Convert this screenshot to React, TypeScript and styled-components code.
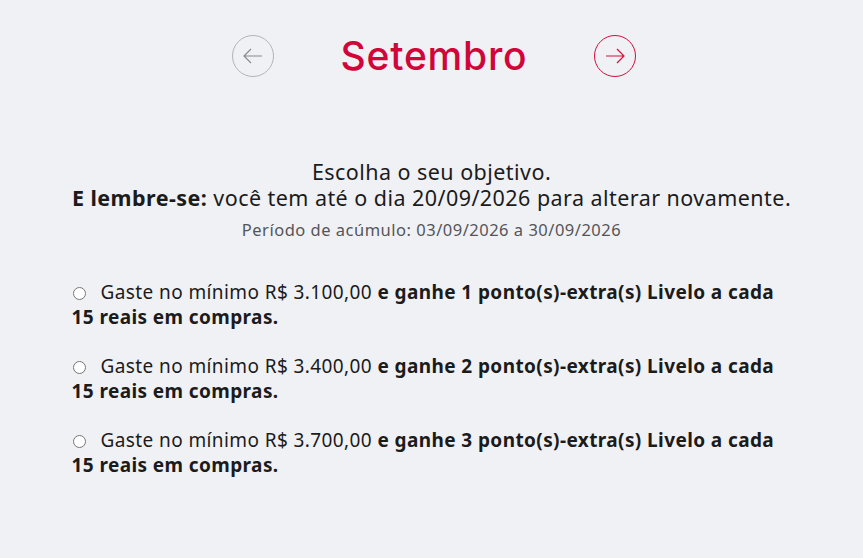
import React, { useState } from 'react';
import styled, { createGlobalStyle } from 'styled-components';

const GlobalStyle = createGlobalStyle`
    html, body {
        margin: 0;
        padding: 0;
        background-color: #f0f1f5;
    }
    body {
        font-family: "Noto Sans", "Open Sans", sans-serif;
        color: #1b1b1b;
    }
`;

const Page = styled.div`
    width: 100%;
    min-height: 558px;
    display: flex;
    flex-direction: column;
    align-items: center;
    padding-top: 32px;
    box-sizing: border-box;
`;

const MonthNav = styled.div`
    display: flex;
    align-items: center;
    gap: 67px;
    margin-left: 5px;
`;

const ArrowButton = styled.button<{ active?: boolean }>`
    width: 42px;
    height: 42px;
    border-radius: 50%;
    border: 1px solid ${props => props.active ? '#d4103c' : '#b4b4b8'};
    background: transparent;
    display: flex;
    align-items: center;
    justify-content: center;
    padding: 0;
    cursor: pointer;
    color: ${props => props.active ? '#d4103c' : '#8a8a8e'};
`;

const MonthTitle = styled.h1`
    margin: 0;
    font-family: Inter, Lato, sans-serif;
    font-weight: 500;
    font-size: 39px;
    color: #d0063a;
    letter-spacing: 0.8px;
`;

const Intro = styled.div`
    margin-top: 80px;
    text-align: center;
    font-size: 21.5px;
    line-height: 26px;
    letter-spacing: 0.45px;
`;

const Bold = styled.strong`
    font-weight: 700;
`;

const Period = styled.div`
    margin-top: 7px;
    text-align: center;
    font-size: 16.5px;
    color: #555558;
    letter-spacing: 0.5px;
`;

const OptionList = styled.div`
    margin-top: 39px;
    width: 720px;
    display: flex;
    flex-direction: column;
    gap: 24px;
`;

const Option = styled.label`
    display: block;
    font-size: 19px;
    line-height: 25px;
    letter-spacing: 0.4px;
    cursor: pointer;
`;

const Radio = styled.span<{ checked?: boolean }>`
    display: inline-block;
    width: 13px;
    height: 13px;
    border-radius: 50%;
    border: 1px solid #767676;
    margin: 0 15px 0 1px;
    vertical-align: -1px;
    box-sizing: border-box;
    box-shadow: ${props => props.checked ? 'inset 0 0 0 3px #fff' : 'none'};
    background-color: ${props => props.checked ? '#d0063a' : '#fff'};
`;

const options = [
    { min: '3.100,00', pts: 1 },
    { min: '3.400,00', pts: 2 },
    { min: '3.700,00', pts: 3 },
];

const ArrowLeft = () => (
    <svg width="24" height="24" viewBox="0 0 24 24" fill="none" stroke="currentColor" strokeWidth="1.2">
        <path d="M21 12H3M10 5l-7 7 7 7" />
    </svg>
);

const ArrowRight = () => (
    <svg width="24" height="24" viewBox="0 0 24 24" fill="none" stroke="currentColor" strokeWidth="1.2">
        <path d="M3 12h18M14 5l7 7-7 7" />
    </svg>
);

export default function App() {
    const [selected, setSelected] = useState<number | null>(null);

    return (
        <>
            <GlobalStyle />
            <Page>
                <MonthNav>
                    <ArrowButton aria-label="Mês anterior"><ArrowLeft /></ArrowButton>
                    <MonthTitle>Setembro</MonthTitle>
                    <ArrowButton active aria-label="Próximo mês"><ArrowRight /></ArrowButton>
                </MonthNav>

                <Intro>
                    Escolha o seu objetivo.<br />
                    <Bold>E lembre-se:</Bold> você tem até o dia 20/09/2026 para alterar novamente.
                </Intro>
                <Period>Período de acúmulo: 03/09/2026 a 30/09/2026</Period>

                <OptionList>
                    {options.map((o, i) => (
                        <Option key={i} onClick={() => setSelected(i)}>
                            <Radio checked={selected === i} />
                            Gaste no mínimo R$ {o.min}{' '}
                            <Bold>e ganhe {o.pts} ponto(s)-extra(s) Livelo a cada 15 reais em compras.</Bold>
                        </Option>
                    ))}
                </OptionList>
            </Page>
        </>
    );
}
